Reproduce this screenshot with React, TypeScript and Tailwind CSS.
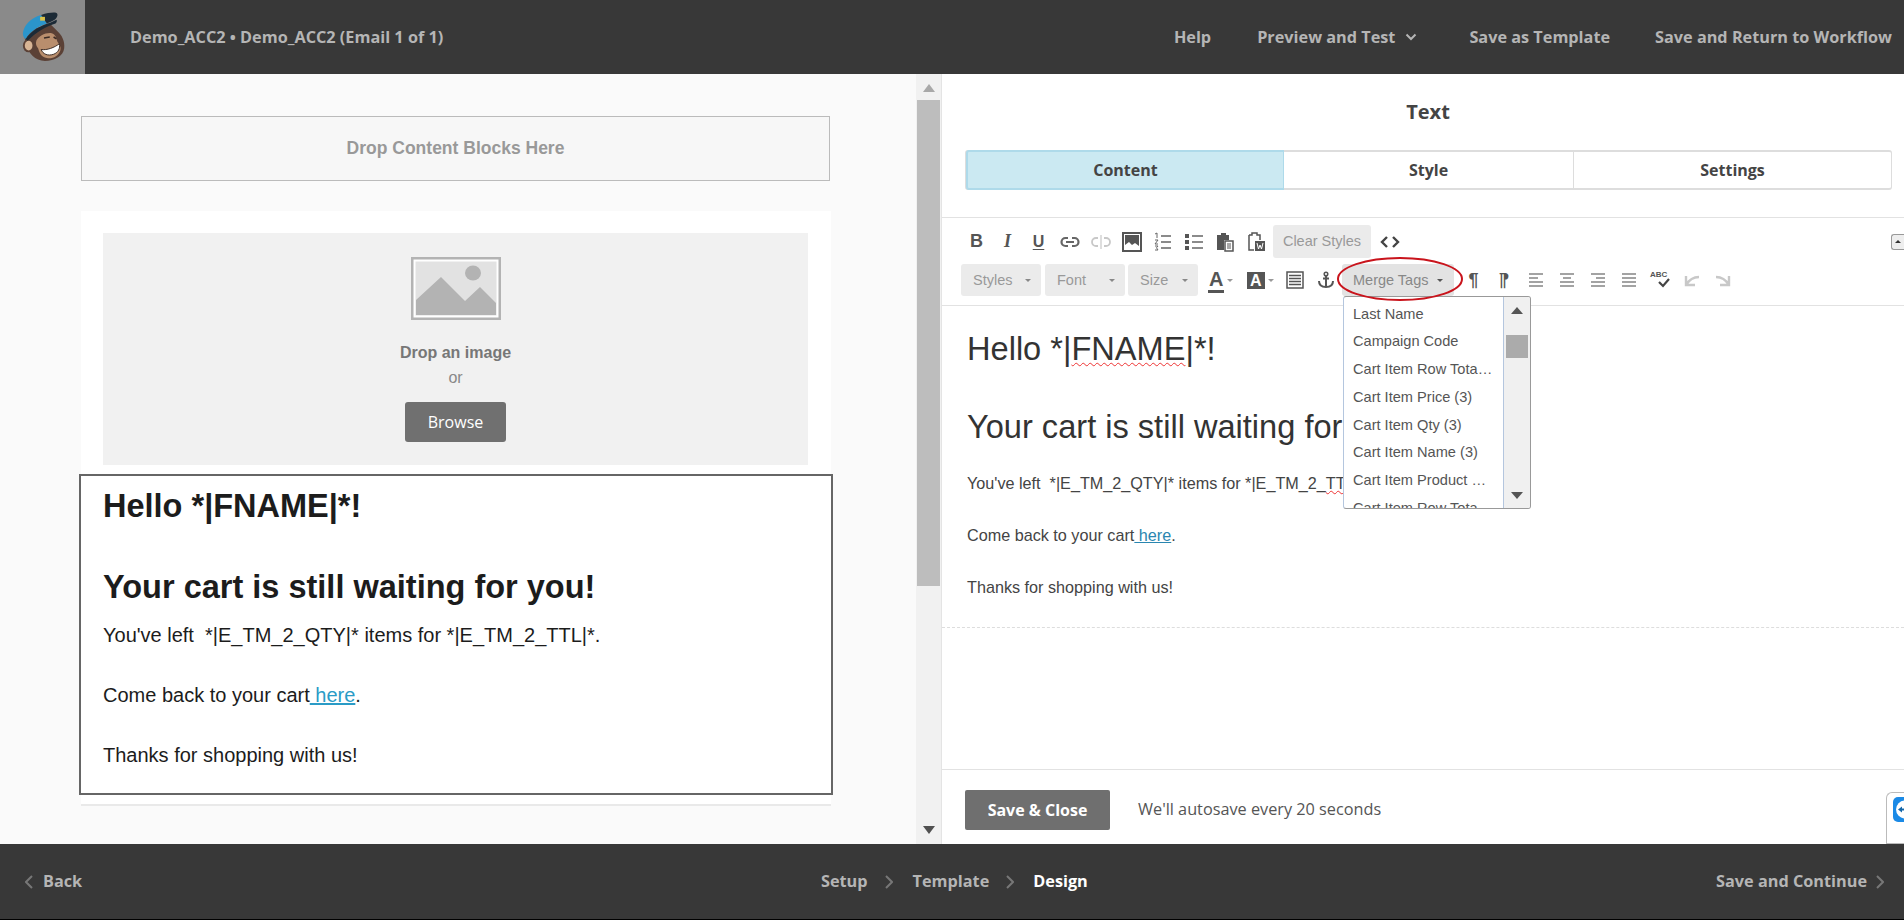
import React from 'react';

const Chevron = ({ dir, className }: { dir: 'left' | 'right'; className: string }) => (
  <svg width="8" height="14" viewBox="0 0 8 14" fill="none" className={className}>
    <path d={dir === 'right' ? 'M1 1l6 6-6 6' : 'M7 1L1 7l6 6'} stroke="currentColor" strokeWidth="2" />
  </svg>
);

const Caret = ({ className = '' }: { className?: string }) => (
  <svg width="6" height="3" viewBox="0 0 6 3" className={className}>
    <path d="M0 0h6L3 3z" fill="currentColor" />
  </svg>
);

const Logo = () => (
  <svg width="48" height="50" viewBox="0 0 50 52" className="ml-[2px]">
    <path d="M6 31C4 26 5 22 8 19l24-6 6 6c6 5 9 12 8 19-1 8-10 13-20 13-10 0-18-8-20-20z" fill="#5b4136" />
    <ellipse cx="9" cy="35" rx="6" ry="7" fill="#5b4136" />
    <ellipse cx="9" cy="35" rx="4" ry="5" fill="#d8b595" />
    <path d="M17 30c2-5 10-9 16-8 4 1 5 5 6 9 2 3 4 5 3 9-2 6-8 9-14 8-6-1-8-6-9-10-2-2-3-5-2-8z" fill="#b98e6d" />
    <path d="M22 39c6 1 14-2 19-6 1 5-1 9-6 11-6 2-11 0-13-5z" fill="#fff" stroke="#3a2a24" strokeWidth="1" />
    <path d="M25 27l6-1M35 26l3 2" stroke="#3a2a24" strokeWidth="1.6" />
    <path d="M3 22C4 14 11 6 22 3l6 9C19 15 11 20 6 28c-2-1-3-3-3-6z" fill="#2b95cb" />
    <path d="M22 3c7-2 13-3 16-2 2 1 1 5-2 7-3 2-6 3-8 4z" fill="#1c2a36" />
    <path d="M6 28c6-8 15-14 26-17l6-3c1 1 0 3-1 4C27 15 17 21 8 30z" fill="#1c2a36" />
    <rect x="21" y="5" width="5" height="4" fill="#d8c14a" />
  </svg>
);

const Stroke = ({ children, muted = false }: { children: React.ReactNode; muted?: boolean }) => (
  <svg width="20" height="20" viewBox="0 0 20 20" fill="none" stroke={muted ? '#c8c8c8' : '#666'} strokeWidth="1.6">
    {children}
  </svg>
);

const Cell = ({ w = 'w-[31px]', children }: { w?: string; children: React.ReactNode }) => (
  <div className={`${w} h-8 flex items-center justify-center shrink-0 text-[#555]`}>{children}</div>
);

const LeftCell = ({ w, children }: { w: string; children: React.ReactNode }) => (
  <div className={`${w} h-8 flex items-center shrink-0 text-[#555]`}>{children}</div>
);

const AlignIcon = ({ lines }: { lines: string[] }) => (
  <Stroke>
    {lines.map((d) => (
      <path key={d} d={d} strokeWidth="1.2" />
    ))}
  </Stroke>
);

const SelectButton = ({ label, w, className = '' }: { label: string; w: string; className?: string }) => (
  <div className={`${w} ${className} h-8 rounded-[3px] bg-[#ebebeb] flex items-center justify-between pl-3 pr-[10px] pt-px text-[14.5px] text-[#999] shrink-0`}>
    <span>{label}</span>
    <Caret className="text-[#888]" />
  </div>
);

const mergeTags = [
  'Last Name',
  'Campaign Code',
  'Cart Item Row Tota…',
  'Cart Item Price (3)',
  'Cart Item Qty (3)',
  'Cart Item Name (3)',
  'Cart Item Product …',
  'Cart Item Row Tota',
];

const App: React.FC = () => {
  return (
    <div className="relative w-[1904px] h-[920px] overflow-hidden flex flex-col bg-black font-['Liberation_Sans',sans-serif]">
      {/* Top bar */}
      <header className="h-[74px] shrink-0 bg-[#383838] flex items-center font-['Open_Sans',sans-serif] text-[16.25px] font-bold text-[#b5b5b5]">
        <div className="w-[85px] h-full bg-[#8a8a8a] flex items-center justify-center shrink-0">
          <Logo />
        </div>
        <div className="ml-[45px]">Demo_ACC2 • Demo_ACC2 (Email 1 of 1)</div>
        <nav className="ml-auto pr-[12px] flex items-center">
          <span>Help</span>
          <span className="ml-[46px]">Preview and Test</span>
          <svg width="12" height="8" viewBox="0 0 12 8" fill="none" className="ml-[10px]">
            <path d="M1.5 1.5L6 6l4.5-4.5" stroke="currentColor" strokeWidth="2" />
          </svg>
          <span className="ml-[52px]">Save as Template</span>
          <span className="ml-[45px]">Save and Return to Workflow</span>
        </nav>
      </header>

      <main className="h-[770px] shrink-0 flex bg-white">
        {/* Email canvas */}
        <section className="w-[916px] shrink-0 bg-[#fafafa] pl-[81px] pt-[42px]">
          <div className="w-[749px] h-[65px] border border-[#bbb] bg-[#f7f7f7] flex items-center justify-center text-[17.5px] font-bold text-[#999]">
            Drop Content Blocks Here
          </div>
          <div className="w-[750px] mt-[30px] bg-white pt-[22px]">
            <div className="ml-[22px] w-[705px] h-[232px] bg-[#f1f1f1] flex flex-col items-center pt-[24px]">
              <svg width="90" height="63" viewBox="0 0 90 63">
                <rect x="1.5" y="1.5" width="87" height="60" fill="#e2e2e2" stroke="#b3b3b3" strokeWidth="3" />
                <rect x="3.5" y="3.5" width="83" height="56" fill="none" stroke="#fff" strokeWidth="2" />
                <path d="M5 43l25-23 24 24 15-14 16 16v12H5z" fill="#b3b3b3" />
                <ellipse cx="62" cy="16" rx="8" ry="7.5" fill="#b3b3b3" />
              </svg>
              <div className="mt-[23px] text-[16px] leading-5 font-bold text-[#777]">Drop an image</div>
              <div className="mt-[5px] text-[16px] leading-5 text-[#888]">or</div>
              <div className="mt-[14px] w-[101px] h-10 rounded-[3px] bg-[#707070] flex items-center justify-center font-['Open_Sans',sans-serif] text-[16px] text-white">
                Browse
              </div>
            </div>
            <div className="h-[9px]" />
            <div className="-ml-[2px] w-[754px] h-[321px] border-2 border-[#666] bg-white pl-[22px] pt-[10px] text-[#1c1c1c]">
              <div className="text-[32.5px] leading-10 font-bold">Hello *|FNAME|*!</div>
              <div className="mt-[41px] text-[32.5px] leading-10 font-bold">Your cart is still waiting for you!</div>
              <div className="mt-[15px] text-[20px] leading-[27px]">You've left&nbsp; *|E_TM_2_QTY|* items for *|E_TM_2_TTL|*.</div>
              <div className="mt-[33px] text-[20px] leading-[27px]">
                Come back to your cart
                <span className="text-[#2a9bc6] underline"> here</span>.
              </div>
              <div className="mt-[33px] text-[20px] leading-[27px]">Thanks for shopping with us!</div>
            </div>
            <div className="h-[9px]" />
            <div className="h-[2px] bg-[#e9e9e9]" />
          </div>
        </section>

        {/* Canvas scrollbar */}
        <div className="w-[26px] shrink-0 bg-[#f1f1f1] border-r border-[#e4e4e4] flex flex-col items-center">
          <svg width="12" height="8" viewBox="0 0 12 8" className="mt-[10px] shrink-0">
            <path d="M0 8h12L6 0z" fill="#a8a8a8" />
          </svg>
          <div className="w-[23px] h-[486px] mt-2 bg-[#bdbdbd]" />
          <svg width="12" height="8" viewBox="0 0 12 8" className="mt-auto mb-[10px] shrink-0">
            <path d="M0 0h12L6 8z" fill="#505050" />
          </svg>
        </div>

        {/* Text block editor */}
        <section className="relative flex-1 min-w-0 flex flex-col">
          <h2 className="h-[76px] shrink-0 pl-[10px] flex items-center justify-center font-['Open_Sans',sans-serif] text-[20px] font-bold text-[#444]">Text</h2>
          <div className="ml-[23px] w-[927px] h-10 shrink-0 flex rounded-[3px] border border-[#ddd] border-y-2 font-['Open_Sans',sans-serif] text-[16px] font-bold text-[#444]">
            <div className="w-[318px] -my-[2px] bg-[#cbe9f2] border-2 border-[#aedaea] border-r rounded-l-[3px] flex items-center justify-center">Content</div>
            <div className="w-[290px] border-r border-[#ddd] flex items-center justify-center">Style</div>
            <div className="flex-1 flex items-center justify-center">Settings</div>
          </div>

          <div className="mt-[27px] h-[89px] shrink-0 border-y border-[#e2e2e2] pl-[19px]">
            <div className="mt-[7px] h-[33px] flex items-center">
              <Cell><span className="text-[18px] font-bold">B</span></Cell>
              <Cell><span className="font-['Liberation_Serif',serif] text-[18px] font-bold italic">I</span></Cell>
              <Cell><span className="text-[16px] font-bold underline underline-offset-2">U</span></Cell>
              <Cell>
                <Stroke>
                  <path d="M8 6H5.500a4 4 0 000 8H8M12 6h2.500a4 4 0 010 8H12M6 10h8" strokeWidth="2.200" />
                </Stroke>
              </Cell>
              <Cell>
                <Stroke muted>
                  <path d="M7 6H5a4 4 0 000 8h2M13 6h2a4 4 0 010 8h-2" strokeWidth="1.800" />
                  <path d="M10 3v14" strokeWidth="1.200" />
                </Stroke>
              </Cell>
              <Cell>
                <svg width="20" height="20" viewBox="0 0 20 20">
                  <rect x="1" y="1" width="18" height="18" fill="#fff" stroke="#555" strokeWidth="2" />
                  <path d="M3 3h14v11l-4-3-3 2-3-3-4 3z" fill="#555" />
                </svg>
              </Cell>
              <Cell>
                <Stroke>
                  <path d="M8 4h10M8 10h10M8 16h10" strokeWidth="1.300" />
                  <path d="M2 2l2-1v5M2 8h3l-3 4h3M2 14h3l-1.500 1.800L5 18H2" strokeWidth="1" />
                </Stroke>
              </Cell>
              <Cell>
                <svg width="20" height="20" viewBox="0 0 20 20">
                  <rect x="1" y="2" width="4" height="4" fill="#555" />
                  <rect x="1" y="8" width="4" height="4" fill="#555" />
                  <rect x="1" y="14" width="4" height="4" fill="#555" />
                  <path d="M8 4h11M8 10h11M8 16h11" stroke="#666" strokeWidth="1.300" />
                </svg>
              </Cell>
              <Cell>
                <svg width="20" height="20" viewBox="0 0 20 20">
                  <path d="M2 3h4V1h5v2h3v5H9v10H2z" fill="#555" />
                  <rect x="10" y="9" width="8" height="10" fill="#fff" stroke="#555" strokeWidth="1.500" />
                  <path d="M12 12h4M12 14h4M12 16h4" stroke="#555" />
                </svg>
              </Cell>
              <Cell>
                <svg width="20" height="20" viewBox="0 0 20 20">
                  <path d="M3 3h3V1h5v2h3v5M8 18H3V3" fill="none" stroke="#555" strokeWidth="1.500" />
                  <rect x="9" y="9" width="10" height="10" fill="#555" />
                  <path d="M11 11l1.500 6 1.500-4 1.500 4 1.500-6" fill="none" stroke="#fff" />
                </svg>
              </Cell>
              <div className="ml-[2px] w-[98px] h-[33px] rounded-[3px] bg-[#ebebeb] flex items-center justify-center text-[14.5px] text-[#999] shrink-0">
                Clear Styles
              </div>
              <Cell w="w-[38px]">
                <svg width="20" height="14" viewBox="0 0 20 14" fill="none">
                  <path d="M7 2L2 7l5 5M13 2l5 5-5 5" stroke="#444" strokeWidth="2.400" />
                </svg>
              </Cell>
              <div className="ml-auto w-[13px] h-4 border border-[#999] border-r-0 rounded-l-[3px] bg-[#eee] flex items-center justify-center text-[#333]">
                <svg width="6" height="3" viewBox="0 0 6 3"><path d="M0 3h6L3 0z" fill="currentColor" /></svg>
              </div>
            </div>
            <div className="mt-[6px] h-8 flex items-center">
              <SelectButton label="Styles" w="w-[80px]" />
              <SelectButton label="Font" w="w-[80px]" className="ml-1" />
              <SelectButton label="Size" w="w-[70px]" className="ml-[3px]" />
              <div className="ml-[10px] flex">
                <LeftCell w="w-[39px]">
                  <span className="text-[20px] leading-[22px] font-bold border-b-[3px] border-[#555] px-px">A</span>
                  <Caret className="ml-[3px] text-[#999]" />
                </LeftCell>
                <LeftCell w="w-[39px]">
                  <span className="bg-[#555] text-white text-[16px] font-bold leading-[17px] px-[3px]">A</span>
                  <Caret className="ml-[3px] text-[#999]" />
                </LeftCell>
                <LeftCell w="w-[31px]">
                  <svg width="18" height="18" viewBox="0 0 18 18" fill="none" stroke="#555">
                    <rect x="1" y="1" width="16" height="16" strokeWidth="1.500" />
                    <path d="M3 4.500h12M3 7.500h12M3 10.500h12M3 13.500h12" strokeWidth="1.500" />
                  </svg>
                </LeftCell>
                <LeftCell w="w-[25px]">
                  <svg width="18" height="18" viewBox="0 0 18 18" fill="none" stroke="#555" strokeWidth="2">
                    <circle cx="9" cy="3" r="1.800" strokeWidth="1.500" />
                    <path d="M9 5v12M6 7.500h6M2 10c0 4 3 6 7 6s7-2 7-6" />
                  </svg>
                </LeftCell>
              </div>
              <div className="w-[112px] h-8 rounded-[3px] bg-[#e3e3e3] flex items-center justify-between pl-[11px] pr-[11px] pt-px text-[14.5px] text-[#888] shrink-0">
                <span>Merge Tags</span>
                <Caret className="text-[#555]" />
              </div>
              <div className="ml-[4px] flex">
                <Cell><span className="text-[18px] font-bold">¶</span></Cell>
                <Cell><span className="text-[18px] font-bold -scale-x-100">¶</span></Cell>
                <Cell><AlignIcon lines={['M3 4h14', 'M3 8h9', 'M3 12h14', 'M3 16h14']} /></Cell>
                <Cell><AlignIcon lines={['M3 4h14', 'M6 8h8', 'M3 12h14', 'M3 16h14']} /></Cell>
                <Cell><AlignIcon lines={['M3 4h14', 'M8 8h9', 'M3 12h14', 'M3 16h14']} /></Cell>
                <Cell><AlignIcon lines={['M3 4h14', 'M3 8h14', 'M3 12h14', 'M3 16h14']} /></Cell>
                <Cell w="w-[32px]">
                  <div className="relative w-5 h-5">
                    <span className="absolute left-0 top-0 text-[8px] leading-[10px] font-bold">ABC</span>
                    <svg width="12" height="10" viewBox="0 0 12 10" className="absolute right-0 bottom-0.5" fill="none">
                      <path d="M1 4l4 4 6-7" stroke="#444" strokeWidth="2.200" />
                    </svg>
                  </div>
                </Cell>
                <Cell>
                  <Stroke muted>
                    <path d="M4 6v9h9M4 15c3-5 7-8 13-8" strokeWidth="2.400" />
                  </Stroke>
                </Cell>
                <Cell>
                  <Stroke muted>
                    <path d="M16 6v9H7M16 15c-3-5-7-8-13-8" strokeWidth="2.400" />
                  </Stroke>
                </Cell>
              </div>
            </div>
          </div>

          <div className="pl-[25px] pt-[23px] h-[322px] shrink-0 border-b border-dashed border-[#ddd] text-[#333]">
            <div className="text-[32.6px] leading-10 whitespace-nowrap">
              Hello *|<span className="underline decoration-wavy decoration-[#e33] decoration-1 underline-offset-2">FNAME</span>|*!
            </div>
            <div className="mt-[38px] text-[32.6px] leading-10 whitespace-nowrap">Your cart is still waiting for you!</div>
            <div className="mt-[24px] text-[16.2px] leading-6 text-[#444] whitespace-nowrap">
              You've left&nbsp; *|E_TM_2_QTY|* items for *|E_TM_2_<span className="underline decoration-wavy decoration-[#e33] decoration-1">TTL</span>|*.
            </div>
            <div className="mt-[28px] text-[16.2px] leading-6 text-[#444]">
              Come back to your cart<span className="text-[#2a86b0] underline"> here</span>.
            </div>
            <div className="mt-[28px] text-[16.2px] leading-6 text-[#444]">Thanks for shopping with us!</div>
          </div>

          <div className="flex-1" />
          <div className="h-[75px] shrink-0 border-t border-[#e2e2e2] pl-[23px] flex items-center font-['Open_Sans',sans-serif] text-[16px]">
            <div className="w-[145px] h-[40px] rounded-[2px] bg-[#6f6f6f] flex items-center justify-center font-bold text-white mt-[5px]">Save &amp; Close</div>
            <div className="ml-[28px] text-[16.25px] text-[#555] mt-[5px]">We'll autosave every 20 seconds</div>
          </div>

          {/* TeamViewer side tab */}
          <div className="absolute right-0 bottom-0 w-[18px] h-[52px] bg-white border border-r-0 border-[#bbb] rounded-tl-[6px] pt-[4px] pl-[6px]">
            <svg width="14" height="25" viewBox="0 0 14 25">
              <path d="M14 0H5a5 5 0 00-5 5v15a5 5 0 005 5h9z" fill="#1b8ae6" />
              <circle cx="12" cy="12.500" r="9" fill="#fff" />
              <path d="M5 12.500l4-3v2h5v2H9v2z" fill="#1466a8" />
            </svg>
          </div>

          {/* Merge tags dropdown */}
          <div className="absolute left-[401px] top-[222px] w-[188px] h-[213px] flex bg-white border border-[#999] border-l-[#b4c6de] rounded-[3px] overflow-hidden">
            <ul className="w-[160px] shrink-0 border-r border-[#b4c6de] pl-[9px] pt-[3.5px] text-[14.6px] text-[#555]">
              {mergeTags.map((tag) => (
                <li key={tag} className="h-[27.75px] leading-[27.75px] whitespace-nowrap">{tag}</li>
              ))}
            </ul>
            <div className="flex-1 bg-[#f0f0f0] flex flex-col items-center">
              <svg width="12" height="7" viewBox="0 0 12 7" className="mt-[10px] shrink-0"><path d="M0 7h12L6 0z" fill="#555" /></svg>
              <div className="w-[22px] h-[23px] mt-[21px] bg-[#ababab]" />
              <svg width="12" height="7" viewBox="0 0 12 7" className="mt-auto mb-[9px] shrink-0"><path d="M0 0h12L6 7z" fill="#555" /></svg>
            </div>
          </div>

          {/* Annotation ring */}
          <svg width="128" height="46" viewBox="0 0 128 46" fill="none" className="absolute left-[394px] top-[182px]">
            <ellipse cx="64" cy="23" rx="62" ry="21" stroke="#c9141c" strokeWidth="2" />
          </svg>
        </section>
      </main>

      {/* Bottom bar */}
      <footer className="h-[75px] shrink-0 bg-[#383838] flex items-center justify-between font-['Open_Sans',sans-serif] text-[16.25px] font-bold text-[#b5b5b5] relative">
        <div className="pl-[25px] flex items-center">
          <Chevron dir="left" className="text-[#777]" />
          <span className="ml-[10px]">Back</span>
        </div>
        <div className="absolute left-[821px] flex items-center">
          <span>Setup</span>
          <Chevron dir="right" className="ml-[17px] text-[#777]" />
          <span className="ml-[20px]">Template</span>
          <Chevron dir="right" className="ml-[17px] text-[#777]" />
          <span className="ml-[19px] text-white">Design</span>
        </div>
        <div className="pr-[20px] flex items-center">
          <span>Save and Continue</span>
          <Chevron dir="right" className="ml-[9px] text-[#777]" />
        </div>
      </footer>
    </div>
  );
};

export default App;
